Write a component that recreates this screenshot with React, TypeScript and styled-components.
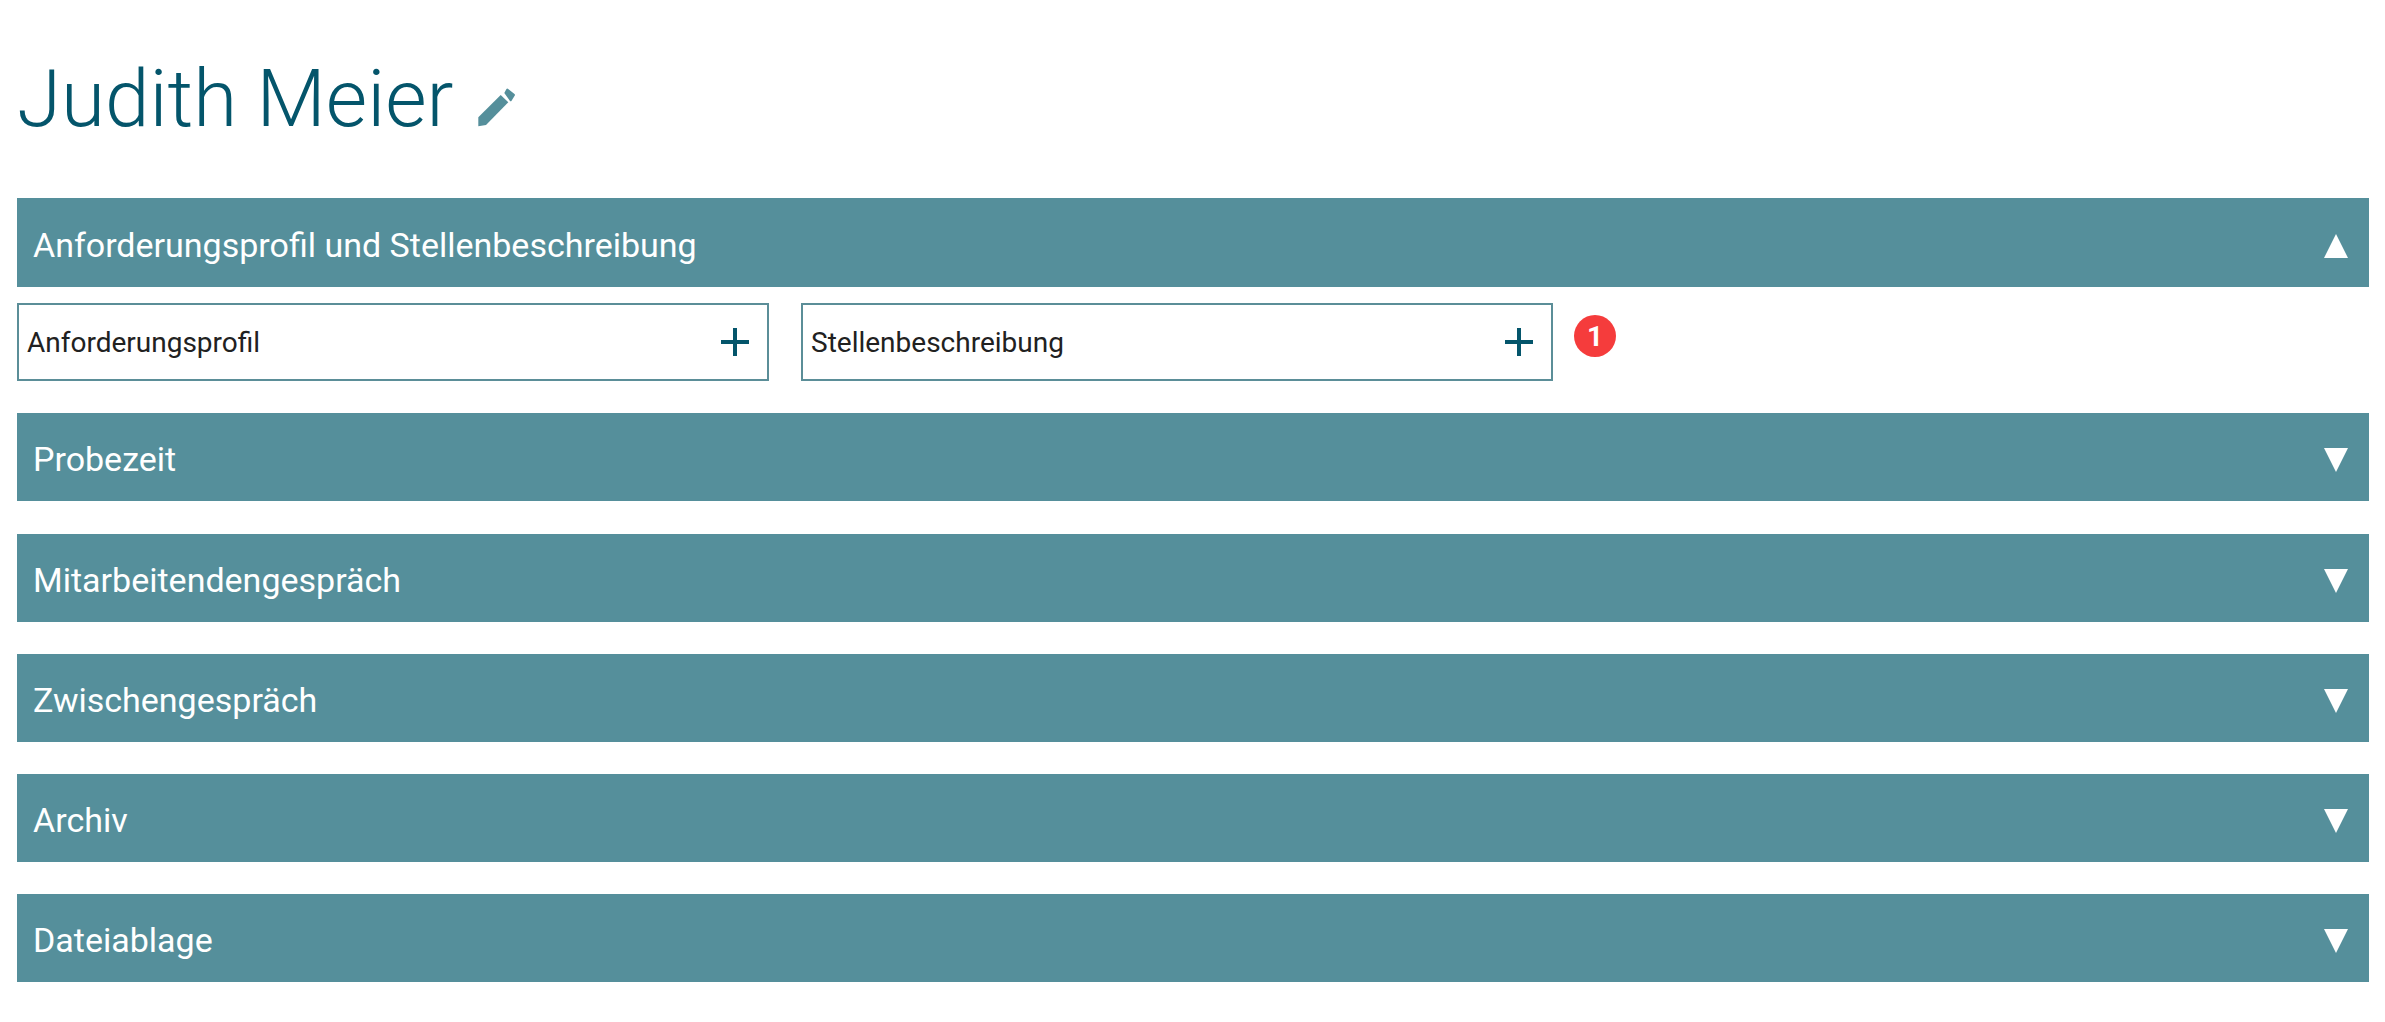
import * as React from "react";
import styled, { createGlobalStyle } from "styled-components";

const GlobalStyle = createGlobalStyle`
  html, body {
    margin: 0;
    padding: 0;
    background: #fff;
    font-family: Roboto, "Liberation Sans", sans-serif;
  }
`;

const Page = styled.div`
  padding: 0 16px 40px 17px;
`;

const TitleRow = styled.div`
  display: flex;
  align-items: center;
  height: 198px;
  gap: 24px;
`;

const Title = styled.h1`
  margin: 0;
  font-size: 80px;
  font-weight: 300;
  color: #04556b;
  line-height: 1;
`;

const EditIcon = styled.svg`
  width: 40px;
  height: 40px;
  margin-top: 16px;
  fill: #558f9b;
`;

const Section = styled.section`
  margin-bottom: 32.3px;
`;

const SectionBar = styled.div<{ $open?: boolean }>`
  box-sizing: border-box;
  display: flex;
  align-items: center;
  justify-content: space-between;
  height: ${(p) => (p.$open ? "89px" : "88px")};
  padding: 4px 21px 0 16px;
  background: #558f9b;
  color: #fff;
  font-size: 34px;
`;

const Caret = styled.span<{ $open?: boolean }>`
  width: 0;
  height: 0;
  margin-top: 2px;
  border-left: 12px solid transparent;
  border-right: 12px solid transparent;
  ${(p) =>
    p.$open
      ? "border-bottom: 24px solid #fff;"
      : "border-top: 24px solid #fff;"}
`;

const Items = styled.div`
  display: flex;
  align-items: flex-start;
  margin-top: 16px;
`;

const Item = styled.div`
  box-sizing: border-box;
  display: flex;
  align-items: center;
  justify-content: space-between;
  width: 752px;
  height: 78px;
  margin-right: 32px;
  padding: 0 17px 0 8px;
  border: 2px solid #5b8e98;
  font-size: 28px;
  color: #212121;
`;

const PlusIcon = styled.svg`
  width: 30px;
  height: 30px;
  stroke: #04556b;
  stroke-width: 4;
`;

const Badge = styled.span`
  display: flex;
  align-items: center;
  justify-content: center;
  width: 42px;
  height: 42px;
  margin: 12px 0 0 -11px;
  border-radius: 50%;
  background: #f53c3c;
  color: #fff;
  font-size: 28px;
  font-weight: 700;
`;

function Plus() {
  return (
    <PlusIcon viewBox="0 0 30 30">
      <path d="M15 1v28M1 15h28" fill="none" />
    </PlusIcon>
  );
}

const closedSections = [
  "Probezeit",
  "Mitarbeitendengespräch",
  "Zwischengespräch",
  "Archiv",
  "Dateiablage",
];

export default function App() {
  return (
    <Page>
      <GlobalStyle />
      <TitleRow>
        <Title>Judith Meier</Title>
        <EditIcon viewBox="0 0 40 40">
          <path d="M1.3 30.3 23.7 8l7.6 7.3L9 38l-7.7 1.3z" />
          <path d="M27.3 6l2-3.7a1.3 1.3 0 0 1 1.9-.3l6.3 5a1.3 1.3 0 0 1 .3 1.6l-3.4 5.3a1 1 0 0 1-1.4.2z" />
        </EditIcon>
      </TitleRow>
      <Section>
        <SectionBar $open>
          Anforderungsprofil und Stellenbeschreibung
          <Caret $open />
        </SectionBar>
        <Items>
          <Item>
            Anforderungsprofil
            <Plus />
          </Item>
          <Item>
            Stellenbeschreibung
            <Plus />
          </Item>
          <Badge>1</Badge>
        </Items>
      </Section>
      {closedSections.map((name) => (
        <Section key={name}>
          <SectionBar>
            {name}
            <Caret />
          </SectionBar>
        </Section>
      ))}
    </Page>
  );
}
